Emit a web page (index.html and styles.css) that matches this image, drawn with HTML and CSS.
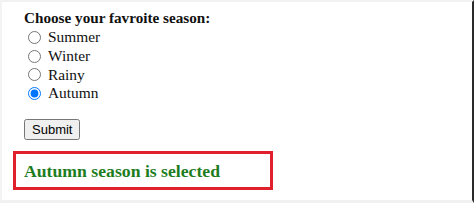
FILE: index.html
```html
<!DOCTYPE html>
<html>
<head>
    <title>Season picker</title>
    <meta charset="UTF-8">
    <link rel="stylesheet" href="styles.css">
</head>
<body>
<div class="frame">
    <form class="season-form">
        <div class="question">Choose your favroite season:</div>
        <label class="option"><input type="radio" name="season" value="summer"> Summer</label>
        <label class="option"><input type="radio" name="season" value="winter"> Winter</label>
        <label class="option"><input type="radio" name="season" value="rainy"> Rainy</label>
        <label class="option"><input type="radio" name="season" value="autumn" checked> Autumn</label>
        <button type="button" class="submit">Submit</button>
    </form>

    <div class="result">Autumn season is selected</div>
</div>
</body>
</html>
```

FILE: styles.css
```css
html, body {
    margin: 0;
    padding: 0;
    background: white;
}

body {
    font-family: "Liberation Serif", "Times New Roman", serif;
    font-size: 15.4px;
    color: #111;
}

.frame {
    box-sizing: border-box;
    height: 203px;
    width: 474px;
    border-top: 2px solid #f1f1f1;
    border-left: 2px solid #f3f3f3;
    border-bottom: 3px solid #f1f1f1;
    border-right: 2px solid #2a2a2a;
    padding: 6px 0 0 22px;
}

.question {
    font-weight: bold;
    font-size: 15.2px;
    line-height: 20px;
}

.option {
    display: flex;
    align-items: center;
    height: 18.7px;
    padding-left: 1px;
}

.option input {
    margin: 0 7px 0 3px;
    width: 13px;
    height: 13px;
}

.submit {
    margin-top: 16px;
    font-family: "Liberation Sans", Arial, sans-serif;
    font-size: 13px;
    padding: 1px 6px;
}

.result {
    box-sizing: border-box;
    width: 260px;
    height: 39px;
    margin: 11px 0 0 -11px;
    border: 3px solid #e0202c;
    padding: 7px 0 0 8px;
    color: #1e7d1e;
    font-weight: bold;
    font-size: 17.7px;
}
```
